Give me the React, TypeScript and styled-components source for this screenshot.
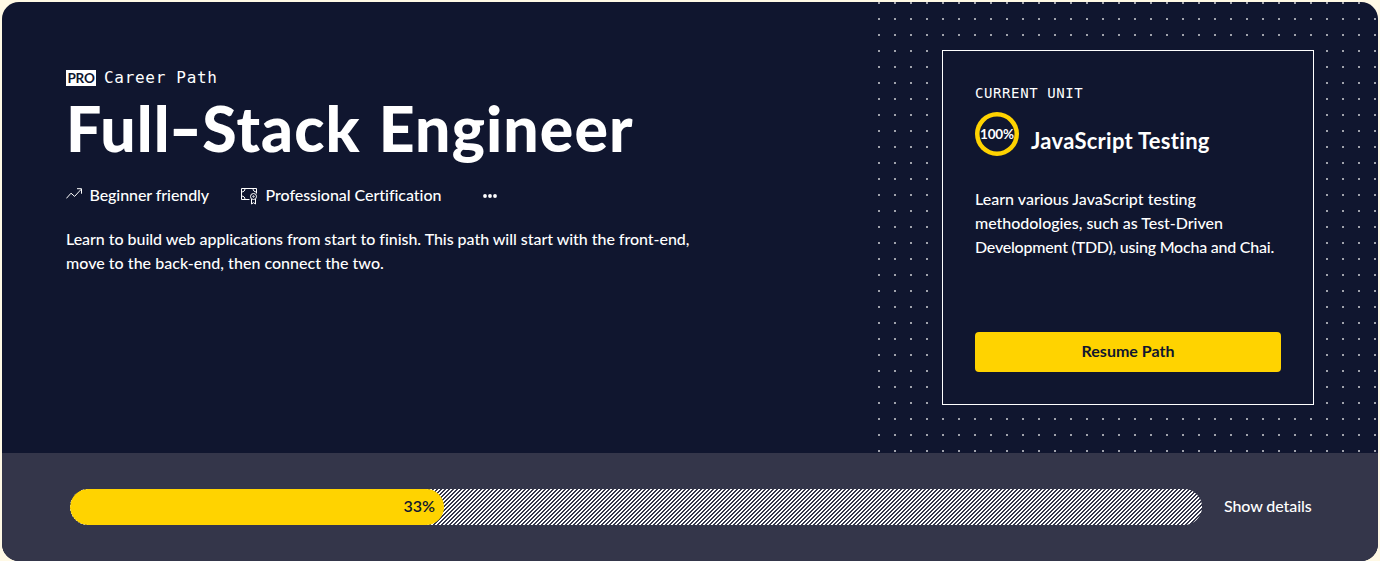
import React from "react";
import styled, { createGlobalStyle } from "styled-components";

const sans = `Lato, "Open Sans", sans-serif`;
const mono = `"DejaVu Sans Mono", "Liberation Mono", monospace`;
const navy = "#10162f";
const yellow = "#ffd300";

const GlobalStyle = createGlobalStyle`
  *, *::before, *::after { box-sizing: border-box; }
  body { margin: 0; background: #fff9e5; color: #fff; font-family: ${sans}; overflow: hidden; }
  h1, h2, p { margin: 0; }
`;

const Banner = styled.section`
  display: flex;
  flex-direction: column;
  width: 1376px;
  height: 558.5px;
  margin: 2px;
  margin-bottom: 0;
  border-radius: 17px;
  overflow: hidden;
  background: ${navy};
`;

const Hero = styled.div`
  display: flex;
  flex: none;
  justify-content: space-between;
  height: 451px;
`;

const Intro = styled.div`
  display: flex;
  flex-direction: column;
  align-items: flex-start;
  padding: 66px 0 0 64px;
`;

const Text = styled.span<{ $spacing?: number }>`
  letter-spacing: ${(p) => p.$spacing ?? 0}px;
  font-variant-ligatures: none;
  white-space: nowrap;
`;

const Eyebrow = styled.div`
  display: flex;
  align-items: center;
  gap: 8px;
  height: 20px;
  font: 16px/20px ${mono};
`;

const ProBadge = styled.span`
  display: flex;
  align-items: center;
  justify-content: center;
  width: 30px;
  height: 16px;
  background: #fff;
  color: ${navy};
  font: 700 13.5px/16px ${sans};
`;

const Title = styled.h1`
  height: 78px;
  margin-top: 1px;
  font: 900 62.5px/78px ${sans};
  letter-spacing: 1.1px;
  word-spacing: 2px;
  white-space: nowrap;
`;

const Hyphen = styled.span`
  display: inline-block;
  margin: 0 3.5px;
  transform: scaleX(1.4);
`;

const Facts = styled.div`
  display: flex;
  align-items: center;
  height: 24px;
  margin-top: 16px;
  font: 500 16px/24px ${sans};

  svg { flex: none; margin-top: 2px; }
`;

const Fact = styled.div<{ $width: number }>`
  display: flex;
  align-items: center;
  gap: 7.5px;
  width: ${(p) => p.$width}px;
`;

const Summary = styled.p`
  display: flex;
  flex-direction: column;
  margin-top: 20px;
  font: 500 16px/24px ${sans};
`;

const DotField = styled.div`
  width: 504px;
  padding: 48px 64px 0 68px;
  background-image: conic-gradient(from 0deg at 2px 2px, transparent 0 75%, #a0a2ac 0);
  background-size: 16px 16px;
  background-position: 4px 0;
`;

const UnitCard = styled.article`
  display: flex;
  flex-direction: column;
  width: 372px;
  height: 355px;
  padding: 30px 32px 32px;
  border: 1px solid #fff;
  background: ${navy};
`;

const UnitLabel = styled.div`
  height: 24px;
  font: 14px/24px ${mono};
`;

const UnitHeading = styled.div`
  display: flex;
  gap: 12px;
  height: 50px;
  margin-top: 7px;
`;

const Ring = styled.div`
  display: flex;
  align-items: center;
  justify-content: center;
  width: 44px;
  height: 44px;
  padding-bottom: 1px;
  box-shadow: inset 0 0 0 4.5px ${yellow};
  border-radius: 50%;
  font: 700 13.5px/20px ${sans};
`;

const UnitTitle = styled.h2`
  padding-top: 13px;
  font: 700 22px/32px ${sans};
`;

const UnitText = styled.p`
  display: flex;
  flex-direction: column;
  margin-top: 25px;
  font: 500 16px/24px ${sans};
`;

const ResumeButton = styled.button`
  height: 40px;
  margin-top: auto;
  padding: 0 0 2px;
  border: 0;
  border-radius: 4px;
  background: ${yellow};
  color: ${navy};
  font: 700 16px/24px ${sans};
`;

const Footer = styled.div`
  display: flex;
  align-items: center;
  flex: 1;
  padding-left: 68px;
  gap: 22px;
  background: #34364a;
  font: 500 16px/24px ${sans};
`;

const Track = styled.div`
  width: 1132px;
  height: 36px;
  border-radius: 18px;
  overflow: hidden;
  background-color: #34364a;
  background-image: linear-gradient(135deg, #fff 25%, transparent 25% 50%, #fff 50% 75%, transparent 75%);
  background-size: 4px 4px;
`;

const Fill = styled.div`
  display: flex;
  align-items: center;
  justify-content: flex-end;
  height: 36px;
  padding: 0 8.5px 2px 0;
  border-radius: 18px;
  background: ${yellow};
  color: ${navy};
  font-weight: 600;
`;

const DetailsLink = styled.span`
  padding-bottom: 2px;
`;

const TrendIcon = () => (
  <svg width="16" height="16" viewBox="0 0 16 16" fill="none" stroke="#fff">
    <path d="M.4 10.4 5 5.2l3.6 3.2 6.7-7.2M11 .7h4.500v5" />
  </svg>
);

const CertificateIcon = () => (
  <svg width="17" height="17" viewBox="0 0 17 17" fill="none" stroke="#fff">
    <path d="M8.500 11.500h-8V.5h15v5M.5 4C2.700 4 4 2.700 4 .5M12 .5c0 2 1.300 3.500 3.500 3.500M.5 8c2.200 0 3.500 1.300 3.500 3.500" />
    <circle cx="12.500" cy="8.500" r="3" />
    <circle cx="12.500" cy="8.500" r=".7" />
    <path d="M10.500 11v5l2-1.300 2 1.300v-5" />
  </svg>
);

const MoreIcon = () => (
  <svg width="14" height="4" viewBox="0 0 14 4" fill="#fff">
    <circle cx="2" cy="2" r="1.900" />
    <circle cx="7" cy="2" r="1.900" />
    <circle cx="12" cy="2" r="1.900" />
  </svg>
);

export default function App() {
  const progress = 33;
  return (
    <>
      <GlobalStyle />
      <Banner>
        <Hero>
          <Intro>
            <Eyebrow>
              <ProBadge><Text $spacing={-0.2}>PRO</Text></ProBadge>
              <Text $spacing={0.7}>Career Path</Text>
            </Eyebrow>
            <Title>Full<Hyphen>-</Hyphen>Stack Engineer</Title>
            <Facts>
              <Fact $width={175}><TrendIcon /><Text $spacing={-0.08}>Beginner friendly</Text></Fact>
              <Fact $width={242}><CertificateIcon /><Text $spacing={-0.04}>Professional Certification</Text></Fact>
              <MoreIcon />
            </Facts>
            <Summary>
              <Text $spacing={-0.04}>Learn to build web applications from start to finish. This path will start with the front-end,</Text>
              <Text $spacing={0.03}>move to the back-end, then connect the two.</Text>
            </Summary>
          </Intro>
          <DotField>
            <UnitCard>
              <UnitLabel><Text $spacing={0.6}>CURRENT UNIT</Text></UnitLabel>
              <UnitHeading>
                <Ring><Text $spacing={-0.2}>100%</Text></Ring>
                <UnitTitle><Text $spacing={0.28}>JavaScript Testing</Text></UnitTitle>
              </UnitHeading>
              <UnitText>
                <Text $spacing={0.02}>Learn various JavaScript testing</Text>
                <Text $spacing={-0.03}>methodologies, such as Test-Driven</Text>
                <Text $spacing={-0.22}>Development (TDD), using Mocha and Chai.</Text>
              </UnitText>
              <ResumeButton><Text>Resume Path</Text></ResumeButton>
            </UnitCard>
          </DotField>
        </Hero>
        <Footer>
          <Track>
            <Fill style={{ width: `${progress}%` }}><Text>{progress}%</Text></Fill>
          </Track>
          <DetailsLink><Text $spacing={-0.1}>Show details</Text></DetailsLink>
        </Footer>
      </Banner>
    </>
  );
}
